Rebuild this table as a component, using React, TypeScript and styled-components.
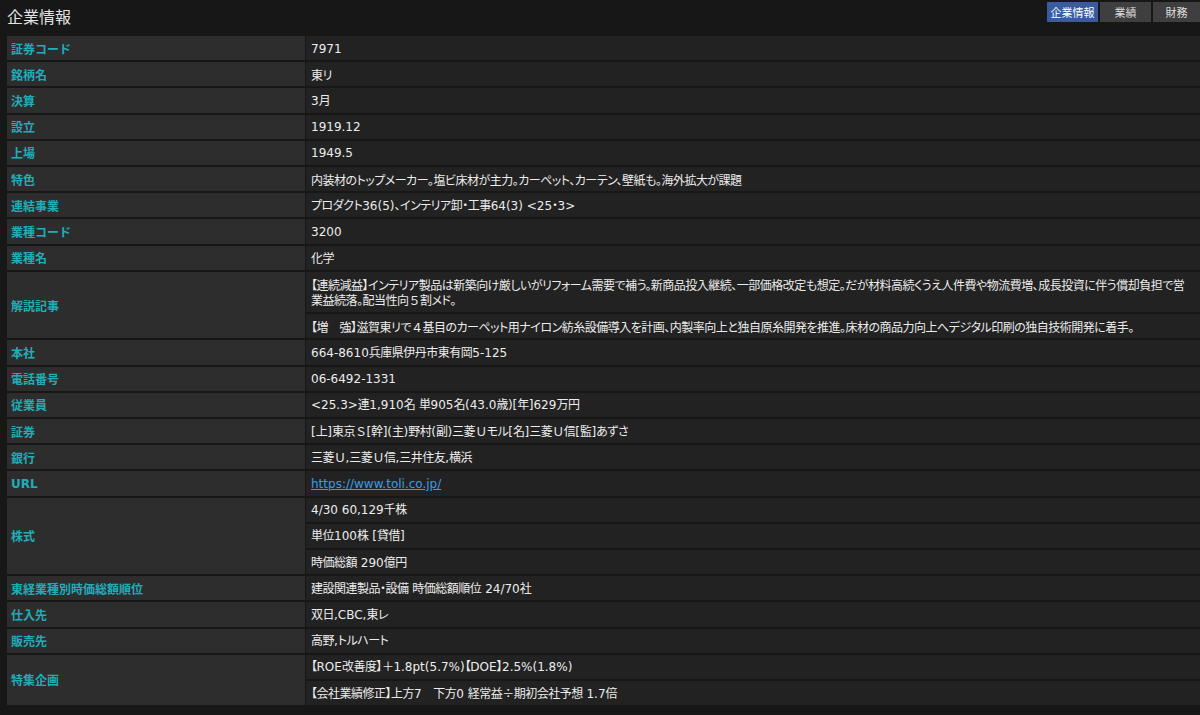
import React from "react";
import styled, { createGlobalStyle } from "styled-components";

const Global = createGlobalStyle`
  html, body { margin: 0; padding: 0; background: #171717; }
  body { font-family: "Noto Sans CJK JP", "Noto Sans", sans-serif; }
`;

const Page = styled.div`
  width: 1200px;
  height: 715px;
  background: #171717;
  overflow: hidden;
`;

const Header = styled.div`
  display: flex;
  justify-content: space-between;
  align-items: flex-start;
  height: 35px;
  padding-left: 7px;
`;

const Title = styled.h1`
  margin: 0;
  padding-top: 5px;
  font-size: 16px;
  line-height: 22px;
  font-weight: normal;
  color: #e2e2e2;
`;

const Tabs = styled.div`
  display: flex;
  gap: 2px;
  padding-top: 2px;
`;

const Tab = styled.div<{ $active?: boolean; $w: number }>`
  width: ${(p) => p.$w}px;
  height: 20px;
  display: flex;
  align-items: center;
  justify-content: center;
  font-size: 11px;
  color: ${(p) => (p.$active ? "#ffffff" : "#dcdcdc")};
  background: ${(p) => (p.$active ? "#3a5ba0" : "#3f3f3f")};
`;

const Table = styled.table`
  margin-left: 6px;
  margin-top: -1px;
  width: 1195px;
  border-collapse: separate;
  border-spacing: 1px 2px;
  table-layout: fixed;
  font-size: 12px;
`;

const Label = styled.th`
  height: 24.2px;
  padding: 0 4px;
  text-align: left;
  vertical-align: middle;
  background: #2d2d2d;
  color: #1fadba;
  font-weight: bold;
  line-height: 15px;
  letter-spacing: 0;
`;

const Value = styled.td<{ $multi?: boolean }>`
  height: 24.2px;
  padding: ${(p) => (p.$multi ? "5.3px 5px" : "0 5px")};
  vertical-align: middle;
  background: #222222;
  color: #ececec;
  line-height: 15px;
  letter-spacing: -0.5px;
  font-feature-settings: "palt";
`;

const Latin = styled.span`
  font-family: "DejaVu Sans", "Noto Sans", sans-serif;
  letter-spacing: 0;
`;

const Wide = styled.span`
  font-feature-settings: normal;
`;

const Link = styled.a`
  color: #3a9de6;
  text-decoration: underline;
`;

const Mixed = ({ text }: { text: string }) => (
  <>
    {text.split(/([\x20-\x7E]+|[\uFF0B\uFF10-\uFF19\uFF21-\uFF3A]+)/).map((s, i) => {
      if (i % 2 === 0) return <React.Fragment key={i}>{s}</React.Fragment>;
      if (/^[\x20-\x7E]+$/.test(s)) return <Latin key={i}>{s}</Latin>;
      return <Wide key={i}>{s}</Wide>;
    })}
  </>
);

type Row = { label: string; values: (string | { url: string })[]; multi?: number[] };

const rows: Row[] = [
  { label: "証券コード", values: ["7971"] },
  { label: "銘柄名", values: ["東リ"] },
  { label: "決算", values: ["3月"] },
  { label: "設立", values: ["1919.12"] },
  { label: "上場", values: ["1949.5"] },
  { label: "特色", values: ["内装材のトップメーカー。塩ビ床材が主力。カーペット、カーテン、壁紙も。海外拡大が課題"] },
  { label: "連結事業", values: ["プロダクト36(5)、インテリア卸・工事64(3) <25・3>"] },
  { label: "業種コード", values: ["3200"] },
  { label: "業種名", values: ["化学"] },
  {
    label: "解説記事",
    values: [
      "【連続減益】インテリア製品は新築向け厳しいがリフォーム需要で補う。新商品投入継続、一部価格改定も想定。だが材料高続くうえ人件費や物流費増、成長投資に伴う償却負担で営業益続落。配当性向５割メド。",
      "【増　強】滋賀東リで４基目のカーペット用ナイロン紡糸設備導入を計画、内製率向上と独自原糸開発を推進。床材の商品力向上へデジタル印刷の独自技術開発に着手。",
    ],
    multi: [0],
  },
  { label: "本社", values: ["664-8610兵庫県伊丹市東有岡5-125"] },
  { label: "電話番号", values: ["06-6492-1331"] },
  { label: "従業員", values: ["<25.3>連1,910名 単905名(43.0歳)[年]629万円"] },
  { label: "証券", values: ["[上]東京Ｓ[幹](主)野村(副)三菱Ｕモル[名]三菱Ｕ信[監]あずさ"] },
  { label: "銀行", values: ["三菱Ｕ,三菱Ｕ信,三井住友,横浜"] },
  { label: "URL", values: [{ url: "https://www.toli.co.jp/" }] },
  { label: "株式", values: ["4/30 60,129千株", "単位100株 [貸借]", "時価総額 290億円"] },
  { label: "東経業種別時価総額順位", values: ["建設関連製品・設備 時価総額順位 24/70社"] },
  { label: "仕入先", values: ["双日,CBC,東レ"] },
  { label: "販売先", values: ["高野,トルハート"] },
  {
    label: "特集企画",
    values: ["【ROE改善度】＋1.8pt(5.7%)【DOE】2.5%(1.8%)", "【会社業績修正】上方7　下方0 経常益÷期初会社予想 1.7倍"],
  },
];

export default function App() {
  return (
    <Page>
      <Global />
      <Header>
        <Title>企業情報</Title>
        <Tabs>
          <Tab $active $w={51}>企業情報</Tab>
          <Tab $w={51}>業績</Tab>
          <Tab $w={47}>財務</Tab>
        </Tabs>
      </Header>
      <Table>
        <colgroup>
          <col style={{ width: 298 }} />
          <col />
        </colgroup>
        <tbody>
          {rows.map((r) =>
            r.values.map((v, i) => (
              <tr key={r.label + i}>
                {i === 0 && (
                  <Label rowSpan={r.values.length}>
                    <Mixed text={r.label} />
                  </Label>
                )}
                <Value $multi={r.multi?.includes(i)}>
                  {typeof v === "string" ? (
                    <Mixed text={v} />
                  ) : (
                    <Link href="#">
                      <Latin>{v.url}</Latin>
                    </Link>
                  )}
                </Value>
              </tr>
            ))
          )}
        </tbody>
      </Table>
    </Page>
  );
}
